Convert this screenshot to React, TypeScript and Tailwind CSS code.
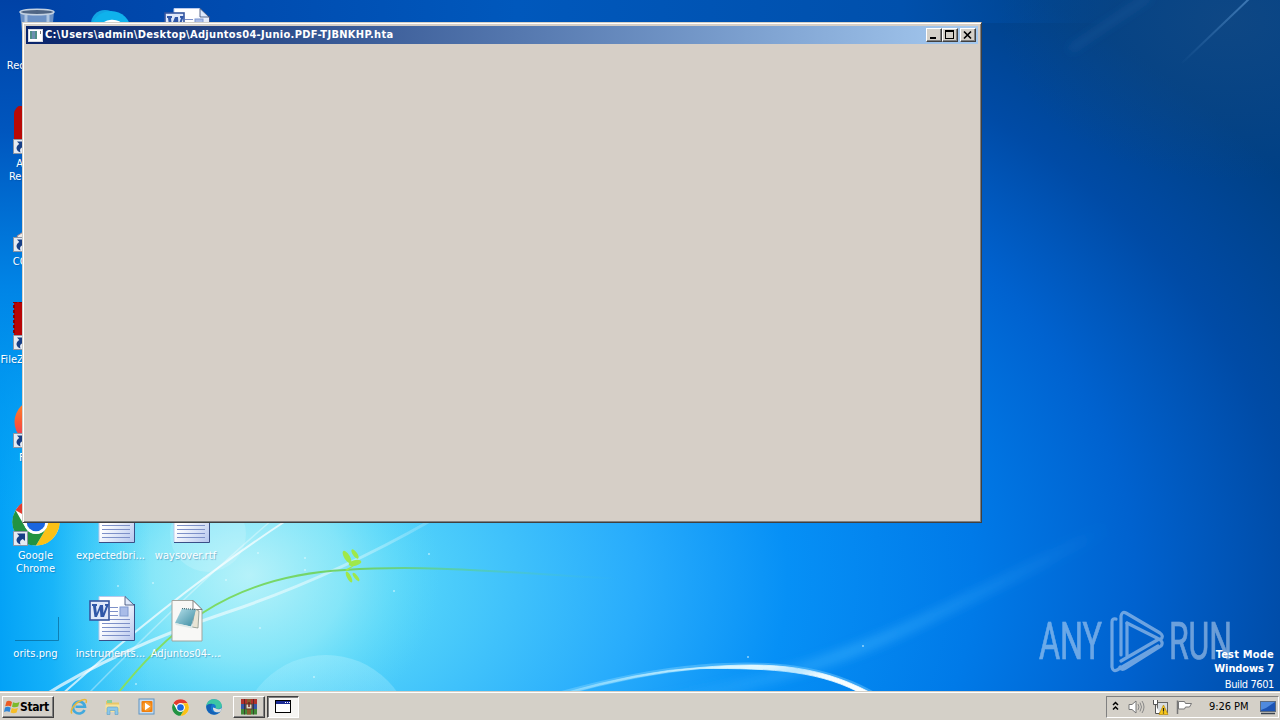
import React from 'react';

const Wallpaper: React.FC = () => (
  <svg className="absolute inset-0" width="1280" height="720" viewBox="0 0 1280 720">
    <defs>
      <radialGradient id="sky" gradientUnits="userSpaceOnUse" cx="0" cy="0" r="1240" gradientTransform="translate(230 580) scale(1 0.62)">
        <stop offset="0" stopColor="#7fe6f8" />
        <stop offset="0.13" stopColor="#56d6fa" />
        <stop offset="0.33" stopColor="#28acfc" />
        <stop offset="0.45" stopColor="#0690f6" />
        <stop offset="0.6" stopColor="#007ae8" />
        <stop offset="0.73" stopColor="#0062cf" />
        <stop offset="0.86" stopColor="#004ba6" />
        <stop offset="1" stopColor="#004085" />
      </radialGradient>
      <radialGradient id="glow" gradientUnits="userSpaceOnUse" cx="0" cy="0" r="190" gradientTransform="translate(250 575) scale(1 0.9)">
        <stop offset="0" stopColor="#c0f4fa" stopOpacity="0.85" />
        <stop offset="0.5" stopColor="#a0eef8" stopOpacity="0.55" />
        <stop offset="1" stopColor="#60dcf8" stopOpacity="0" />
      </radialGradient>
      <linearGradient id="leftShade" x1="0" x2="1" y1="0" y2="0">
        <stop offset="0" stopColor="#00a0f6" stopOpacity="0.95" />
        <stop offset="0.35" stopColor="#00a8f8" stopOpacity="0.7" />
        <stop offset="1" stopColor="#30c8f8" stopOpacity="0" />
      </linearGradient>
      <linearGradient id="leftTop" x1="0" x2="0" y1="0" y2="1">
        <stop offset="0" stopColor="#0042a6" />
        <stop offset="0.25" stopColor="#0056be" />
        <stop offset="0.55" stopColor="#0084e6" />
        <stop offset="1" stopColor="#00a0f4" stopOpacity="0" />
      </linearGradient>
      <linearGradient id="topShade" x1="0" x2="1" y1="0" y2="0">
        <stop offset="0" stopColor="#0042a6" />
        <stop offset="0.45" stopColor="#0058bc" />
        <stop offset="0.8" stopColor="#0050ac" />
        <stop offset="1" stopColor="#004a9c" stopOpacity="0" />
      </linearGradient>
      <linearGradient id="stem" x1="0" x2="1" y1="0" y2="0">
        <stop offset="0" stopColor="#86e060" />
        <stop offset="0.5" stopColor="#6fd26c" />
        <stop offset="0.7" stopColor="#58cf9a" stopOpacity="0.7" />
        <stop offset="1" stopColor="#40c0d8" stopOpacity="0" />
      </linearGradient>
      <linearGradient id="arc" x1="0" x2="1" y1="0" y2="0">
        <stop offset="0" stopColor="#8fdcff" stopOpacity="0.6" />
        <stop offset="0.5" stopColor="#d8f6ff" />
        <stop offset="1" stopColor="#ffffff" />
      </linearGradient>
      <linearGradient id="ray" gradientUnits="userSpaceOnUse" x1="660" y1="700" x2="1110" y2="530">
        <stop offset="0" stopColor="#48b8ff" stopOpacity="0.1" />
        <stop offset="0.4" stopColor="#48b8ff" stopOpacity="0.4" />
        <stop offset="1" stopColor="#48b8ff" stopOpacity="0" />
      </linearGradient>
      <linearGradient id="rayTop" gradientUnits="userSpaceOnUse" x1="1250" y1="0" x2="1180" y2="65">
        <stop offset="0" stopColor="#3d78b4" />
        <stop offset="1" stopColor="#3d78b4" stopOpacity="0" />
      </linearGradient>
      <linearGradient id="beam" gradientUnits="userSpaceOnUse" x1="100" y1="670" x2="440" y2="515">
        <stop offset="0" stopColor="#ffffff" stopOpacity="0.7" />
        <stop offset="0.65" stopColor="#ffffff" stopOpacity="0.45" />
        <stop offset="1" stopColor="#ffffff" stopOpacity="0.15" />
      </linearGradient>
      <radialGradient id="corner">
        <stop offset="0" stopColor="#144a84" stopOpacity="0.7" />
        <stop offset="1" stopColor="#144a84" stopOpacity="0" />
      </radialGradient>
      <linearGradient id="orb" x1="0" x2="0" y1="0" y2="1">
        <stop offset="0" stopColor="#b8f2ff" stopOpacity="0.35" />
        <stop offset="1" stopColor="#7fe0fa" stopOpacity="0.05" />
      </linearGradient>
      <filter id="soft1"><feGaussianBlur stdDeviation="0.7" /></filter>
      <filter id="soft4" x="-20%" y="-20%" width="140%" height="140%"><feGaussianBlur stdDeviation="4" /></filter>
    </defs>
    <rect width="1280" height="720" fill="url(#sky)" />
    <rect width="1280" height="720" fill="url(#glow)" />
    <rect width="150" height="720" fill="url(#leftShade)" />
    <rect width="100" height="520" fill="url(#leftTop)" />
    <rect x="22" width="1100" height="23" fill="url(#topShade)" />
    <ellipse cx="1230" cy="20" rx="230" ry="160" fill="url(#corner)" />
    <path d="M1250 -2 1182 63" stroke="url(#rayTop)" strokeWidth="2" fill="none" />
    <path d="M1150 -4Q1105 26 1070 50" stroke="#2f6cb0" strokeOpacity="0.25" strokeWidth="7" fill="none" filter="url(#soft4)" />

    <circle cx="208" cy="534" r="38" fill="#fff" fillOpacity="0.16" />
    <circle cx="326" cy="742" r="87" fill="url(#orb)" />
    <g fill="none" filter="url(#soft1)">
      <path d="M290 518Q180 590 60 696" stroke="#fff" strokeOpacity="0.7" strokeWidth="2" />
      <path d="M272 520Q190 590 86 696" stroke="#fff" strokeOpacity="0.35" strokeWidth="1.5" />
      <path d="M40 698Q120 648 225 613T430 521" stroke="url(#beam)" strokeWidth="3" />
    </g>
    <path d="M114 698C165 634 225 576 345 570C430 564 510 573 620 579" stroke="url(#stem)" strokeWidth="2" fill="none" />
    <g fill="#9fe84a">
      <ellipse cx="347" cy="557" rx="2.800" ry="7" transform="rotate(-32 347 557)" />
      <ellipse cx="355" cy="554" rx="2.200" ry="5.500" transform="rotate(-35 355 554)" />
      <ellipse cx="355" cy="563" rx="6.500" ry="2.800" transform="rotate(-14 355 563)" />
      <ellipse cx="349" cy="577" rx="2" ry="6" transform="rotate(-28 349 577)" />
      <ellipse cx="356" cy="577" rx="1.800" ry="5" transform="rotate(-38 356 577)" />
      <path d="M345 570l14-8-12 9z" />
    </g>
    <path d="M560 694Q640 672 700 667C765 662 825 664 880 698" stroke="#9be0ff" strokeOpacity="0.35" strokeWidth="5" fill="none" filter="url(#soft1)" />
    <path d="M560 694Q640 671 700 667.500C775 661 825 666 880 698L866 696C822 671 776 668 700 668.500Q640 673 562 695z" fill="url(#arc)" stroke="url(#arc)" strokeWidth="0.800" />
    <path d="M640 706Q800 680 920 622T1110 526" stroke="url(#ray)" strokeWidth="13" fill="none" filter="url(#soft4)" />
    <g fill="#e8fcff">
      {[[118, 586], [153, 583], [226, 580], [305, 558], [258, 553], [305, 570], [429, 554], [260, 628], [220, 656], [136, 684], [863, 646], [748, 657], [394, 591], [314, 677]].map(([x, y]) => (
        <circle key={`${x}-${y}`} cx={x} cy={y} r="1" fillOpacity="0.6" />
      ))}
    </g>
  </svg>
);

const ShortcutArrow: React.FC = () => (
  <svg className="absolute bottom-0 left-px" width="15" height="15" viewBox="0 0 15 15">
    <rect x="0.5" y="0.5" width="14" height="14" fill="#e6ebf2" stroke="#8c96a6" />
    <path d="M4 2.500h8v7.500l-2.200-2c-2.600 1-3.300 2.700-2.300 5.500c-4.500-1.500-5.500-6-1.200-8.500z" fill="#173f86" />
  </svg>
);

const WordDoc: React.FC = () => (
  <svg width="48" height="48" viewBox="0 0 48 48">
    <defs>
      <linearGradient id="page" x1="0" y1="0" x2="1" y2="1">
        <stop offset="0.4" stopColor="#fff" />
        <stop offset="1" stopColor="#b5c6ee" />
      </linearGradient>
    </defs>
    <path d="M12 .5h26l9 8.500v35H12z" fill="url(#page)" />
    <path d="M47.500 8v36.500H12" fill="none" stroke="#3a4f86" />
    <path d="M12 44V.5h26" fill="none" stroke="#b9c9ea" />
    <path d="M38 .5V9h9z" fill="#dfe9fb" stroke="#33456e" strokeWidth="0.8" />
    <path d="M15 23.500h28M15 27.500h28M15 31.500h28M15 35.500h28M15 39.500h28M23 11.500h8M23 15.500h8M23 19.500h8" stroke="#7d90c8" />
    <rect x="33" y="11" width="8" height="9" fill="#a9bce8" stroke="#7f98cf" />
    <rect x="3" y="5" width="19" height="19" fill="#dfe8fa" stroke="#35569f" strokeWidth="1.600" />
    <path d="M5 8h5v2l-1 .3L9.800 17l3.200-8h3l.5 8 2.500-7-1-.2V8h4l-5 13h-3.500l-.6-7-3 7H7.500L6 10H5z" fill="#2f57a8" />
  </svg>
);

const ChromeIcon: React.FC<{ size: number }> = ({ size }) => (
  <svg width={size} height={size} viewBox="0 0 48 48">
    <circle cx="24" cy="24" r="23.500" fill="#fff" />
    <path d="M24 .5A23.500 23.500 0 0 1 44.400 12.200H24A12 12 0 0 0 13.600 18L3.600 12.200A23.500 23.500 0 0 1 24 .5z" fill="#e33b2e" />
    <path d="M44.400 12.200A23.500 23.500 0 0 1 24 47.500L34.400 30A12 12 0 0 0 24 12.200z" fill="#fbc116" />
    <path d="M24 47.500A23.500 23.500 0 0 1 3.600 12.200L13.600 30A12 12 0 0 0 34.400 30z" fill="#229342" />
    <circle cx="24" cy="24" r="11.800" fill="#fff" />
    <circle cx="24" cy="24" r="9.300" fill="#1a66e0" />
  </svg>
);

const RecycleBin: React.FC = () => (
  <svg width="48" height="48" viewBox="0 0 48 48">
    <path d="M8 4 12 45h26l4-41z" fill="#8fabcf" fillOpacity="0.75" />
    <path d="M14 7v16M36 7v16" stroke="#d9e8f6" strokeOpacity="0.6" strokeWidth="3" />
    <ellipse cx="25" cy="4" rx="17" ry="2.800" fill="#4f6584" stroke="#c4d2e2" strokeWidth="1.500" />
  </svg>
);

const SkypeIcon: React.FC = () => (
  <svg width="48" height="48" viewBox="0 0 48 48">
    <circle cx="18" cy="16" r="14" fill="#12a5e4" />
    <circle cx="24" cy="23" r="20" fill="#0fb2ec" />
    <path d="M15 22c0-10 19-10 19-2M15 22c2 7 19 3 18 12c-2 7-17 6-18-1" stroke="#fff" strokeWidth="5" fill="none" />
  </svg>
);

const AcrobatIcon: React.FC = () => (
  <svg width="48" height="48" viewBox="0 0 48 48">
    <rect x="2" y="-1" width="45" height="45" rx="9" fill="#b90a06" />
    <path d="M12 36c8-6 14-18 12-26c-2 10 4 19 14 20c-10-1-20 2-26 6z" fill="none" stroke="#fff" strokeWidth="2.500" />
  </svg>
);

const CCleanerIcon: React.FC = () => (
  <svg width="48" height="48" viewBox="0 0 48 48">
    <path d="M5 32 16 25l14-18 6 3-9 18 8 14-22 3z" fill="#ece8e4" stroke="#a88" />
  </svg>
);

const FileZillaIcon: React.FC = () => (
  <svg width="48" height="48" viewBox="0 0 48 48">
    <rect x="2" y="0" width="44" height="44" fill="#b80505" stroke="#8c0000" strokeWidth="2" strokeDasharray="3 2" />
    <path d="M18 38V12h18M18 24h14" stroke="#fff" strokeWidth="5" fill="none" />
  </svg>
);

const FirefoxIcon: React.FC = () => (
  <svg width="48" height="48" viewBox="0 0 48 48">
    <defs>
      <linearGradient id="fox" x1="0" x2="0" y1="0" y2="1">
        <stop offset="0" stopColor="#ff8a2a" />
        <stop offset="0.5" stopColor="#fb5a34" />
        <stop offset="1" stopColor="#e8306a" />
      </linearGradient>
    </defs>
    <circle cx="25" cy="22" r="22.500" fill="url(#fox)" />
    <circle cx="26" cy="24" r="11" fill="#6a3ce0" />
  </svg>
);

const BlankImage: React.FC = () => (
  <svg width="48" height="48" viewBox="0 0 48 48">
    <path d="M3 44.500h43.500V21" fill="none" stroke="#08618e" strokeOpacity="0.65" />
  </svg>
);

const HtaFile: React.FC = () => (
  <svg width="48" height="48" viewBox="0 0 48 48">
    <defs>
      <linearGradient id="pad" x1="0" y1="0" x2="1" y2="1">
        <stop offset="0" stopColor="#b8e2ec" />
        <stop offset="1" stopColor="#3a8aa0" />
      </linearGradient>
    </defs>
    <path d="M10 4.500h21l9 9v31.500H10z" fill="#f8f8f6" stroke="#a2a59e" />
    <path d="M31 4.500v9h9z" fill="#fff" stroke="#666" strokeWidth="0.800" />
    <path d="M33 13l4 2-1 17-6-1z" fill="#e8e4d4" stroke="#77857c" strokeWidth="0.700" />
    <path d="M20 12.500 34 13.500 29 30.500 13 27z" fill="url(#pad)" />
    <path d="M20 12.500 34 13.500" stroke="#496a72" strokeWidth="1.200" strokeDasharray="1 1" />
    <path d="M29 30.500 13 27l1 2 16 3.500 3-10z" fill="#dfe9e8" />
  </svg>
);

interface DesktopItem {
  label: string;
  icon: React.ReactNode;
  shortcut?: boolean;
}

const columns: (DesktopItem | null)[][] = [
  [
    { label: 'Recycle Bin', icon: <RecycleBin /> },
    { label: 'Acrobat Reader DC', icon: <AcrobatIcon />, shortcut: true },
    { label: 'CCleaner', icon: <CCleanerIcon />, shortcut: true },
    { label: 'FileZilla Client', icon: <FileZillaIcon />, shortcut: true },
    { label: 'Firefox', icon: <FirefoxIcon />, shortcut: true },
    { label: 'Google Chrome', icon: <ChromeIcon size={48} />, shortcut: true },
    { label: 'orits.png', icon: <BlankImage /> },
  ],
  [
    { label: 'Skype', icon: <SkypeIcon /> },
    null, null, null, null,
    { label: 'expectedbri...', icon: <WordDoc /> },
    { label: 'instruments...', icon: <WordDoc /> },
  ],
  [
    { label: '', icon: <WordDoc /> },
    null, null, null, null,
    { label: 'waysover.rtf', icon: <WordDoc /> },
    { label: 'Adjuntos04-...', icon: <HtaFile /> },
  ],
];

const DesktopIcons: React.FC = () => (
  <div className="absolute top-0 left-[-2px] flex">
    {columns.map((column, c) => (
      <div key={c} className="flex w-[75px] flex-col">
        {column.map((item, r) => (
          <div key={r} className="flex h-[98px] flex-col items-center pt-[8px]">
            {item && (
              <>
                <div className="relative h-[48px] w-[48px]">
                  {item.icon}
                  {item.shortcut && <ShortcutArrow />}
                </div>
                <div className="mt-[3px] w-[74px] text-center text-[11px] leading-[13px] tracking-[0.050px] text-white [text-shadow:1px_1px_1px_rgba(0,60,120,0.35)]">
                  {item.label}
                </div>
              </>
            )}
          </div>
        ))}
      </div>
    ))}
  </div>
);

const captionButton = 'flex h-[14px] w-[16px] items-center justify-center border border-t-white border-l-white border-r-[#404040] border-b-[#404040] bg-[#d4d0c8] shadow-[inset_-1px_-1px_0_#808080]';

const HtaWindow: React.FC = () => (
  <div className="absolute top-[22px] left-[22px] flex h-[501px] w-[960px] flex-col border border-t-[#d4d0c8] border-l-[#d4d0c8] border-r-[#404040] border-b-[#404040] bg-[#d6cfc7] p-[3px] shadow-[inset_1px_1px_0_#fff,inset_-1px_-1px_0_#808080]">
    <div className="flex h-[18px] items-center bg-linear-to-r from-[#0a246a] to-[#a6caf0] pr-[2px] pl-[2px]">
      <svg width="15" height="13" viewBox="0 0 15 13">
        <rect x="0.500" y="0.500" width="14" height="12" fill="#fff" stroke="#d8dce4" />
        <rect x="2" y="2" width="7" height="8" fill="#4f8f86" />
        <path d="M4 2h3v8H4z" fill="#6c8fb0" />
        <path d="M12.500 2v3" stroke="#777" />
      </svg>
      <span className="ml-[2px] text-[11px] leading-[18px] font-bold tracking-[0.320px] whitespace-nowrap text-white">C:\Users\admin\Desktop\Adjuntos04-Junio.PDF-TJBNKHP.hta</span>
      <div className="ml-auto flex">
        <div className={captionButton}>
          <svg width="12" height="10" viewBox="0 0 12 10"><path d="M2 8h6" stroke="#000" strokeWidth="2" /></svg>
        </div>
        <div className={captionButton}>
          <svg width="12" height="10" viewBox="0 0 12 10" shapeRendering="crispEdges"><path d="M1.500 1v7.500h8V1M1 1h9" fill="none" stroke="#000" /><path d="M1 1h9" stroke="#000" strokeWidth="2" /></svg>
        </div>
        <div className={`${captionButton} ml-[2px]`}>
          <svg width="12" height="10" viewBox="0 0 12 10"><path d="M2 1.500 9 8.500M9 1.500 2 8.500" stroke="#000" strokeWidth="1.700" /></svg>
        </div>
      </div>
    </div>
  </div>
);

const Watermark: React.FC = () => (
  <svg className="absolute top-[600px] left-[1030px]" width="210" height="80" viewBox="0 0 210 80">
    <g opacity="0.48" fill="#e2ecf8" stroke="#e2ecf8" strokeWidth="0.700" fontFamily="Roboto, sans-serif" fontSize="52">
      <text x="9" y="59" textLength="63" lengthAdjust="spacingAndGlyphs">ANY</text>
      <text x="139" y="59" textLength="63" lengthAdjust="spacingAndGlyphs">RUN</text>
    </g>
    <g opacity="0.48" fill="none" stroke="#e2ecf8" strokeWidth="3.200" strokeLinejoin="round" strokeLinecap="round">
      <path d="M86 19q-4-1-4 3v45q1 5 5 3l41-24" />
      <path d="M91 55V16q1-5 5-3l34 20q4 3 1 6q-2 1-4-1L97 23" />
      <path d="M97 23v33M91 61l38-22q5 3 2 7L96 68q-5 3-6-1" />
    </g>
  </svg>
);

const BuildInfo: React.FC = () => (
  <div className="absolute right-[6px] bottom-[27px] flex flex-col items-end text-[11px] text-white">
    <span className="leading-[14px] font-bold tracking-[0.200px]">Test Mode</span>
    <span className="leading-[14px] font-bold">Windows 7</span>
    <span className="mt-[1px] leading-[16px] tracking-[-0.400px]">Build 7601</span>
  </div>
);

const StartLogo: React.FC = () => (
  <svg width="16" height="16" viewBox="0 0 16 16">
    <path d="M2.500 2.500Q5 1 8 3L7 7.500Q4.500 6 1.200 7.300z" fill="#ec5b24" />
    <path d="M9 3.300Q12 4.800 15.500 3L14.200 7.600Q11 9 8 7.800z" fill="#7cba2c" />
    <path d="M1 8.500Q4 7 6.700 8.700L5.600 13Q3 11.600 0 13z" fill="#2f86d6" />
    <path d="M7.800 9Q10.500 10.500 13.900 9L12.600 13.500Q9.500 15 6.600 13.500z" fill="#f6bd26" />
  </svg>
);

const IeIcon: React.FC = () => (
  <svg width="18" height="18" viewBox="0 0 18 18">
    <path d="M14.500 12A6 6 0 1 1 15 8.800H5.500" fill="none" stroke="#42a9dd" strokeWidth="2.600" />
    <path d="M2 15.500C-1 12 6 4 12 2c4-1.500 5 0 4 3" fill="none" stroke="#e8b83a" strokeWidth="1.500" />
  </svg>
);

const ExplorerIcon: React.FC = () => (
  <svg width="18" height="18" viewBox="0 0 18 18">
    <path d="M2 3h5l1 1.500h7V14H2z" fill="#e8c766" />
    <path d="M3 2h5v3H3z" fill="#8ccf9a" />
    <path d="M1.500 6.500h14V14h-14z" fill="#f7e39b" />
    <path d="M3 16.500v-6q0-1.500 1.500-1.500h8q1.500 0 1.500 1.500v6h-3v-4H6v4z" fill="#8cc7e8" stroke="#5b9fc8" strokeWidth="0.600" />
  </svg>
);

const MediaIcon: React.FC = () => (
  <svg width="18" height="18" viewBox="0 0 18 18">
    <rect x="1" y="1" width="15" height="15" fill="#c9dcee" stroke="#5d94c4" />
    <rect x="3.500" y="3" width="11" height="11" rx="1" fill="#f0800f" />
    <circle cx="9" cy="8.500" r="4.500" fill="#f79a2c" />
    <path d="M7 4.800 12.300 8.500 7 12.200z" fill="#fff" />
  </svg>
);

const EdgeIcon: React.FC = () => (
  <svg width="18" height="18" viewBox="0 0 18 18">
    <circle cx="9" cy="9" r="7.800" fill="#1579cf" />
    <path d="M1.300 8C2 3 5.500 1.200 9 1.200c5 0 8 3.500 7.800 6.800-.3 3-4 3.600-6.300 2.200 1-2-.2-4.200-3-4.200C4.500 6 2.500 7 1.300 8z" fill="#3cc6a4" />
    <path d="M1.300 8C2.500 6.500 5 5.500 7.500 6 5 8 5 13 9.500 14.500c2 .6 4 .2 5.500-.7-4 5-13.500 3-13.700-5.800z" fill="#1560b4" />
    <path d="M10.500 10.200c2 1.600 5 1.200 6.200-.5-.1 1.600-.7 3-1.700 4.100-3 1.500-7.500 0-7-4.300z" fill="#d9dde0" />
  </svg>
);

const WinrarIcon: React.FC = () => (
  <svg width="18" height="16" viewBox="0 0 18 16">
    <rect x="1" y="0" width="16" height="5" fill="#b0322c" />
    <rect x="1" y="5" width="16" height="5" fill="#3558a8" />
    <rect x="1" y="10" width="16" height="5.500" fill="#3f8a38" />
    <path d="M4.500 0v15.500M13.500 0v15.500" stroke="#3c2424" strokeOpacity="0.700" />
    <path d="M7 0h4v15.500H7z" fill="#8a5a2c" />
    <rect x="6" y="5" width="6" height="5" fill="#ded6c4" stroke="#5c3a20" />
    <path d="M9 3v5" stroke="#702020" strokeWidth="1.500" />
  </svg>
);

const AppWindowIcon: React.FC = () => (
  <svg width="16" height="14" viewBox="0 0 16 14" shapeRendering="crispEdges">
    <rect x="0.500" y="0.500" width="15" height="12" fill="#fff" stroke="#000" />
    <rect x="1" y="1" width="14" height="3" fill="#1a2a94" />
    <path d="M10 2.500h1M12 2.500h1M14 2.500h1" stroke="#fff" />
  </svg>
);

const Taskbar: React.FC = () => (
  <div className="absolute inset-x-0 bottom-0 flex h-[28px] items-start border-t border-white bg-[#d4d0c8] pt-[3px] pr-[1px] pl-[2px] shadow-[0_-1px_0_#d4d0c8]">
    <div className="flex h-[22px] w-[52px] items-center border border-t-white border-l-white border-r-[#404040] border-b-[#404040] pl-px shadow-[inset_-1px_-1px_0_#808080]">
      <StartLogo />
      <span className="text-[12px] font-bold tracking-[-0.400px] text-black">Start</span>
    </div>
    <div className="ml-[16px] flex h-[22px] items-center gap-[16px]">
      <IeIcon />
      <ExplorerIcon />
      <MediaIcon />
      <ChromeIcon size={17} />
      <EdgeIcon />
    </div>
    <div className="ml-[10px] flex h-[22px] w-[32px] items-center justify-center border border-t-white border-l-white border-r-[#404040] border-b-[#404040] shadow-[inset_-1px_-1px_0_#808080]">
      <WinrarIcon />
    </div>
    <div className="ml-[2px] flex h-[22px] w-[32px] items-center justify-center border border-t-[#404040] border-l-[#404040] border-r-white border-b-white bg-[#f6f5f2] shadow-[inset_1px_1px_0_#808080]">
      <AppWindowIcon />
    </div>
    <div className="ml-auto flex h-[22px] w-[173px] items-center border border-t-[#808080] border-l-[#808080] border-r-white border-b-white pl-[5px]">
      <svg width="8" height="12" viewBox="0 0 8 12">
        <path d="M1 4 3.500 1.500 6 4M1 8.500 3.500 6 6 8.500" fill="none" stroke="#000" strokeWidth="1.500" />
      </svg>
      <svg className="ml-[8px]" width="17" height="16" viewBox="0 0 17 16">
        <path d="M1 5.500h3L8 2v12L4 10.500H1z" fill="#fff" stroke="#777" />
        <path d="M10 5q2 3 0 6M12 3.500q3 4.500 0 9M14 2q4 6 0 12" fill="none" stroke="#888" />
      </svg>
      <svg className="ml-[7px]" width="18" height="17" viewBox="0 0 18 17">
        <rect x="5.500" y="3.500" width="10" height="10" fill="#d9dde0" stroke="#666" />
        <path d="M1.500 1v4.500h4V1M3.500 5.500v9H8" fill="#fff" stroke="#555" />
        <path d="M11.500 6 16 15.500H7z" fill="#f8c81c" stroke="#b88a0a" strokeWidth="0.700" />
        <path d="M11.500 9v3.500M11.500 13.500v1" stroke="#222" strokeWidth="1.200" />
      </svg>
      <svg className="ml-[6px]" width="17" height="16" viewBox="0 0 17 16">
        <path d="M1.500 15V1.500" stroke="#777" strokeWidth="1.500" />
        <path d="M2.500 2.500h6l1 2h6l-2 3.500h-4l-1 2h-6z" fill="#fff" stroke="#777" />
      </svg>
      <span className="ml-[16px] text-[11px] tracking-[-0.050px] whitespace-nowrap text-black">9:26 PM</span>
      <svg className="mr-[2px] ml-auto" width="16" height="15" viewBox="0 0 16 15">
        <rect x="0.500" y="1.500" width="15" height="10" fill="#1c54b4" stroke="#5c6c80" />
        <path d="M1 2h14L6 8 1 10z" fill="#4f8ade" />
        <path d="M1 13.500h14" stroke="#3a4450" strokeWidth="1.500" />
      </svg>
    </div>
  </div>
);

const App: React.FC = () => (
  <div className="relative h-[720px] w-[1280px] overflow-hidden bg-[#0078e0] font-['DejaVu_Sans_Condensed','DejaVu_Sans',sans-serif] tracking-[-0.100px]">
    <Wallpaper />
    <DesktopIcons />
    <HtaWindow />
    <Watermark />
    <BuildInfo />
    <Taskbar />
  </div>
);

export default App;
